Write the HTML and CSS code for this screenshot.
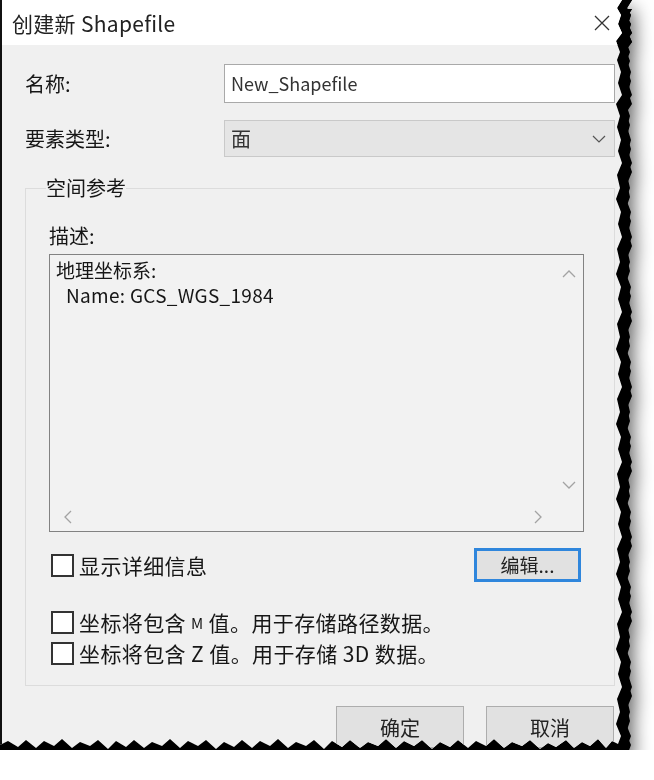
FILE: index.html
```html
<!DOCTYPE html>
<html lang="zh-CN">
  <head>
    <meta charset="UTF-8" />
    <meta name="viewport" content="width=device-width, initial-scale=1.0" />
    <title>创建新 Shapefile</title>
    <link rel="stylesheet" href="styles.css">
  </head>
  <body>
    <div class="paper">
      <div class="dialog">
        <div class="titlebar">
          <span class="title">创建新 Shapefile</span>
          <svg class="close" width="16" height="16" viewBox="0 0 16 16">
            <path d="M1 1 L15 15 M15 1 L1 15" stroke="#333" stroke-width="1.3" fill="none" />
          </svg>
        </div>

        <div class="content">
          <div class="row">
            <span class="label">名称:</span>
            <div class="field">New_Shapefile</div>
          </div>
          <div class="row">
            <span class="label">要素类型:</span>
            <div class="field select">
              <span>面</span>
              <svg width="14" height="8" viewBox="0 0 14 8">
                <polyline points="1,1 7,7 13,1" stroke="#555" stroke-width="1.2" fill="none" />
              </svg>
            </div>
          </div>

          <fieldset class="group">
            <legend>空间参考</legend>
            <div class="desc-label">描述:</div>
            <div class="memo">
              <div class="memo-text">
                <div>地理坐标系:</div>
                <div class="indent">Name: GCS_WGS_1984</div>
              </div>
              <div class="vscroll">
                <svg width="14" height="8" viewBox="0 0 14 8"><polyline points="1,7 7,1 13,7" /></svg>
                <svg width="14" height="8" viewBox="0 0 14 8"><polyline points="1,1 7,7 13,1" /></svg>
              </div>
              <div class="hscroll">
                <svg width="8" height="14" viewBox="0 0 8 14"><polyline points="7,1 1,7 7,13" /></svg>
                <svg width="8" height="14" viewBox="0 0 8 14"><polyline points="1,1 7,7 1,13" /></svg>
              </div>
              <div class="corner"></div>
            </div>

            <div class="detail-row">
              <label class="check"><span class="box"></span>显示详细信息</label>
              <button class="btn edit">编辑...</button>
            </div>

            <div class="options">
              <label class="check"><span class="box"></span>坐标将包含 <span class="small">M</span> 值。用于存储路径数据。</label>
              <label class="check"><span class="box"></span>坐标将包含 Z 值。用于存储 3D 数据。</label>
            </div>
          </fieldset>

          <div class="actions">
            <button class="btn">确定</button>
            <button class="btn">取消</button>
          </div>
        </div>
      </div>
    </div>
  </body>
</html>
```

FILE: styles.css
```css
body {
  margin: 0;
  background: #fff;
  font-family: "Noto Sans CJK SC", "Noto Sans", sans-serif;
  color: #161616;
}

/* torn paper: shadow follows the clipped edge */
.paper {
  width: 622px;
  filter: drop-shadow(10px 0 0 #000) drop-shadow(0 9px 0 #000)
    drop-shadow(4px 9px 9px rgba(0, 0, 0, 0.6));
}
.dialog {
  width: 622px;
  height: 750px;
  box-sizing: border-box;
  border-left: 2px solid #111;
  background: #f0f0f0;
  display: flex;
  flex-direction: column;
  clip-path: polygon(
    0 0, 622px 0, 617px 8px, 621px 15px, 618px 24px, 622px 33px, 616px 41px,
    620px 52px, 617px 60px, 621px 72px, 618px 83px, 622px 95px, 616px 104px,
    620px 116px, 617px 127px, 621px 140px, 618px 151px, 622px 163px, 617px 175px,
    620px 188px, 616px 199px, 621px 212px, 618px 224px, 622px 237px, 617px 249px,
    620px 262px, 616px 274px, 621px 287px, 618px 299px, 622px 312px, 617px 324px,
    620px 337px, 616px 349px, 621px 362px, 618px 374px, 622px 387px, 617px 399px,
    620px 412px, 616px 424px, 621px 437px, 618px 449px, 622px 462px, 617px 474px,
    620px 487px, 616px 499px, 621px 512px, 618px 524px, 622px 537px, 617px 549px,
    620px 562px, 616px 574px, 621px 587px, 618px 599px, 622px 612px, 617px 624px,
    620px 637px, 616px 649px, 621px 662px, 618px 674px, 622px 687px, 617px 699px,
    620px 712px, 616px 724px, 621px 736px, 618px 744px,
    612px 741px, 606px 748px, 598px 739px, 590px 746px, 582px 742px, 574px 748px,
    566px 740px, 556px 747px, 548px 743px, 540px 749px, 530px 740px, 522px 746px,
    512px 742px, 504px 748px, 494px 739px, 486px 746px, 476px 741px, 468px 748px,
    458px 740px, 450px 747px, 440px 742px, 432px 749px, 422px 740px, 414px 746px,
    404px 741px, 396px 748px, 386px 739px, 378px 746px, 368px 742px, 360px 748px,
    350px 740px, 342px 747px, 332px 741px, 324px 749px, 314px 740px, 306px 746px,
    296px 742px, 288px 748px, 278px 739px, 270px 746px, 260px 741px, 252px 748px,
    242px 740px, 234px 747px, 224px 742px, 216px 749px, 206px 740px, 198px 746px,
    188px 741px, 180px 748px, 170px 739px, 162px 746px, 152px 742px, 144px 748px,
    134px 740px, 126px 747px, 116px 741px, 108px 749px, 98px 740px, 90px 746px,
    80px 742px, 72px 748px, 62px 739px, 54px 746px, 44px 741px, 36px 748px,
    26px 740px, 18px 747px, 8px 741px, 0 745px
  );
}

.titlebar {
  height: 45px;
  flex-shrink: 0;
  background: #fff;
  display: flex;
  align-items: center;
  justify-content: space-between;
  padding: 0 12px 0 10px;
}
.title {
  font-size: 21px;
  letter-spacing: 0.3px;
  color: #222;
}

.content {
  padding: 19px 7px 0 23px;
}

.row {
  display: flex;
  align-items: center;
  margin-bottom: 17px;
}
.label {
  width: 199px;
  font-size: 20px;
}
.field {
  flex: 1;
  height: 39px;
  box-sizing: border-box;
  border: 1px solid #a9a9a9;
  background: #fff;
  padding-left: 6px;
  font-size: 18px;
  line-height: 36px;
  color: #333;
}
.select {
  height: 37px;
  line-height: 34px;
  background: #e5e5e5;
  border-color: #c9c9c9;
  display: flex;
  align-items: center;
  justify-content: space-between;
  padding-right: 8px;
  font-size: 20px;
}

.group {
  margin: 4px 0 0;
  padding: 0 0 16px 23px;
  border: 1px solid #dcdcdc;
  min-width: 0;
}
.group legend {
  margin-left: -3px;
  padding: 0;
  font-size: 20px;
  line-height: 28px;
}

.desc-label {
  margin-top: 20px;
  font-size: 20px;
  line-height: 28px;
}

.memo {
  width: 535px;
  height: 278px;
  box-sizing: border-box;
  margin-top: 4px;
  border: 1px solid #828282;
  background: #f2f2f2;
  display: grid;
  grid-template-columns: 1fr 29px;
  grid-template-rows: 1fr 28px;
}
.memo svg polyline {
  stroke: #a3a3a3;
  stroke-width: 1.3;
  fill: none;
}
.memo-text {
  padding: 2px 0 0 6px;
  font-size: 19px;
  line-height: 25px;
}
.indent {
  padding-left: 10px;
  letter-spacing: 0.3px;
}
.vscroll {
  display: flex;
  flex-direction: column;
  align-items: center;
  justify-content: space-between;
  padding: 15px 0 14px;
}
.hscroll {
  display: flex;
  align-items: center;
  justify-content: space-between;
  padding: 0 12px 0 14px;
}

.detail-row {
  width: 535px;
  display: flex;
  align-items: center;
  justify-content: space-between;
  margin-top: 16px;
}
.check {
  display: flex;
  align-items: center;
  font-size: 21px;
  letter-spacing: 0.4px;
  line-height: 31px;
  margin-left: 2px;
}
.box {
  width: 23px;
  height: 23px;
  box-sizing: border-box;
  border: 2px solid #333;
  background: #fff;
  margin-right: 5px;
}
.small {
  font-size: 15px;
  margin: 0 5px;
}

.options {
  margin-top: 25px;
}

.btn {
  font-family: inherit;
  font-size: 20px;
  color: #222;
  background: #e1e1e1;
  border: 1px solid #adadad;
  width: 128px;
  height: 42px;
  padding: 0;
}
.edit {
  width: 107px;
  height: 34px;
  margin-right: 3px;
  border: 3px solid #2f86dc;
  font-size: 19px;
  line-height: 26px;
}

.actions {
  display: flex;
  justify-content: flex-end;
  gap: 22px;
  margin: 20px 1px 0 0;
}
```
